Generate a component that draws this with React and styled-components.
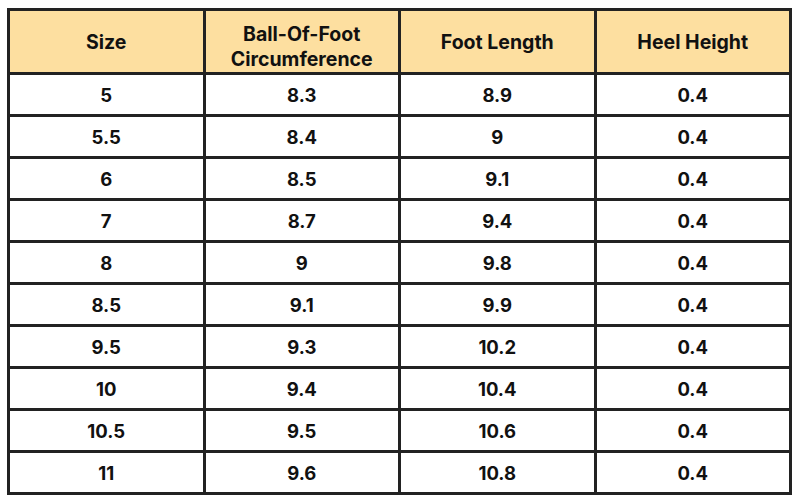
import React from 'react';
import styled, { createGlobalStyle } from 'styled-components';

const GlobalStyle = createGlobalStyle`
  html, body {
    margin: 0;
    padding: 0;
    background: #fff;
  }
  body {
    font-family: Inter, "Liberation Sans", sans-serif;
    color: #111;
  }
`;

const Page = styled.div`
  padding: 8px 8px 0 7px;
`;

const Table = styled.table`
  width: 785px;
  border-collapse: collapse;
  table-layout: fixed;
  border: 3px solid #222;
`;

const HeadRow = styled.tr`
  height: 64px;
  background: #fddfa0;
`;

const Row = styled.tr`
  height: 42px;
  background: #fff;
`;

const HeadCell = styled.th`
  border: 3px solid #222;
  padding: ${(p) => (p.$twoLine ? '10px 4px 0' : '1px 4px 0')};
  font-size: 19.5px;
  font-weight: 700;
  line-height: 25px;
  text-align: center;
  vertical-align: middle;
`;

const Cell = styled.td`
  border: 3px solid #222;
  padding: 0;
  font-size: 18.5px;
  font-weight: 700;
  text-align: center;
  vertical-align: middle;
`;

const rows = [
  ['5', '8.3', '8.9', '0.4'],
  ['5.5', '8.4', '9', '0.4'],
  ['6', '8.5', '9.1', '0.4'],
  ['7', '8.7', '9.4', '0.4'],
  ['8', '9', '9.8', '0.4'],
  ['8.5', '9.1', '9.9', '0.4'],
  ['9.5', '9.3', '10.2', '0.4'],
  ['10', '9.4', '10.4', '0.4'],
  ['10.5', '9.5', '10.6', '0.4'],
  ['11', '9.6', '10.8', '0.4'],
];

export default function App() {
  return (
    <Page>
      <GlobalStyle />
      <Table>
        <thead>
          <HeadRow>
            <HeadCell>Size</HeadCell>
            <HeadCell $twoLine>
              Ball-Of-Foot
              <br />
              Circumference
            </HeadCell>
            <HeadCell>Foot Length</HeadCell>
            <HeadCell>Heel Height</HeadCell>
          </HeadRow>
        </thead>
        <tbody>
          {rows.map((r) => (
            <Row key={r[0]}>
              {r.map((v, i) => (
                <Cell key={i}>{v}</Cell>
              ))}
            </Row>
          ))}
        </tbody>
      </Table>
    </Page>
  );
}
